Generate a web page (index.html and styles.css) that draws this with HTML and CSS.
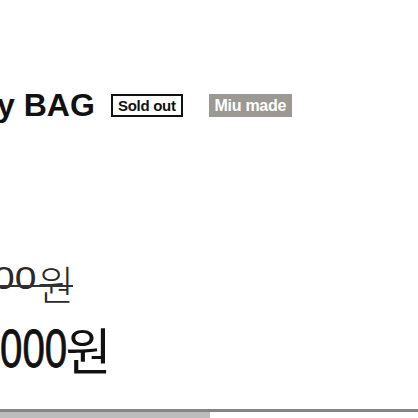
FILE: index.html
```html
<!DOCTYPE html>
<html lang="ko">
<head>
  <meta charset="UTF-8">
  <meta name="viewport" content="width=device-width, initial-scale=1.0">
  <title>BAG</title>
  <link rel="stylesheet" href="styles.css">
</head>
<body>
  <div class="product">
    <div class="title-row">
      <h1 class="title">y BAG</h1>
      <span class="badge sold">Sold out</span>
      <span class="badge maker">Miu made</span>
    </div>
    <div class="prices">
      <p class="price-old"><span class="num">00</span><span class="won">원</span></p>
      <p class="price-new"><span class="num">000</span><span class="won">원</span></p>
    </div>
  </div>
  <div class="scroll-bar">
    <div class="scroll-thumb"></div>
  </div>
</body>
</html>
```

FILE: styles.css
```css
body {
  margin: 0;
  padding: 0;
  height: 418px;
  display: flex;
  flex-direction: column;
  overflow: hidden;
  background: #fff;
  font-family: 'Liberation Sans', 'Noto Sans CJK KR', sans-serif;
  color: #111;
}

.product {
  padding-top: 90px;
}

.title-row {
  display: flex;
  align-items: center;
  height: 30px;
}

.title {
  margin: 0 0 0 -3px;
  font-size: 32px;
  line-height: 30px;
  font-weight: bold;
  white-space: nowrap;
}

.badge {
  font-size: 15px;
  font-weight: bold;
  height: 23px;
  line-height: 23px;
  box-sizing: border-box;
  letter-spacing: -0.3px;
  text-align: center;
}

.sold {
  margin-left: 16px;
  border: 2px solid #111;
  line-height: 19px;
  width: 72px;
}

.maker {
  margin-left: 26px;
  width: 83px;
  font-size: 16px;
  background: #9c9893;
  color: #fff;
}

.prices {
  margin-top: 140px;
}

.price-old,
.price-new {
  display: flex;
  align-items: center;
  margin: 0;
  white-space: nowrap;
}

.num {
  display: inline-block;
  line-height: 1;
  transform-origin: left center;
}

.won {
  font-family: 'Noto Sans CJK KR', sans-serif;
  font-weight: 400;
  line-height: 1;
}

/* old price: wide round digits, struck through */
.price-old {
  position: relative;
  height: 46px;
  color: #2a2a2a;
}

.price-old .num {
  font-size: 32px;
  margin: 0 9px 11px -7px;
  transform: scaleX(1.22);
}

.price-old .won {
  font-size: 40px;
  font-weight: 300;
}

.price-old::after {
  content: "";
  position: absolute;
  left: 0;
  top: 25px;
  width: 73px;
  height: 2px;
  background: #333;
}

/* sale price */
.price-new {
  height: 56px;
  margin-top: 14px;
  color: #111;
}

.price-new .num {
  font-size: 53px;
  margin-right: -23px;
  transform: scaleX(0.76);
  -webkit-text-stroke: 0.8px #111;
}

.price-new .won {
  font-size: 50px;
}

.scroll-bar {
  margin-top: auto;
  height: 9px;
  border-top: 3px solid #858585;
  box-sizing: border-box;
}

.scroll-thumb {
  width: 210px;
  height: 6px;
  background: #bdbdbd;
}
```
